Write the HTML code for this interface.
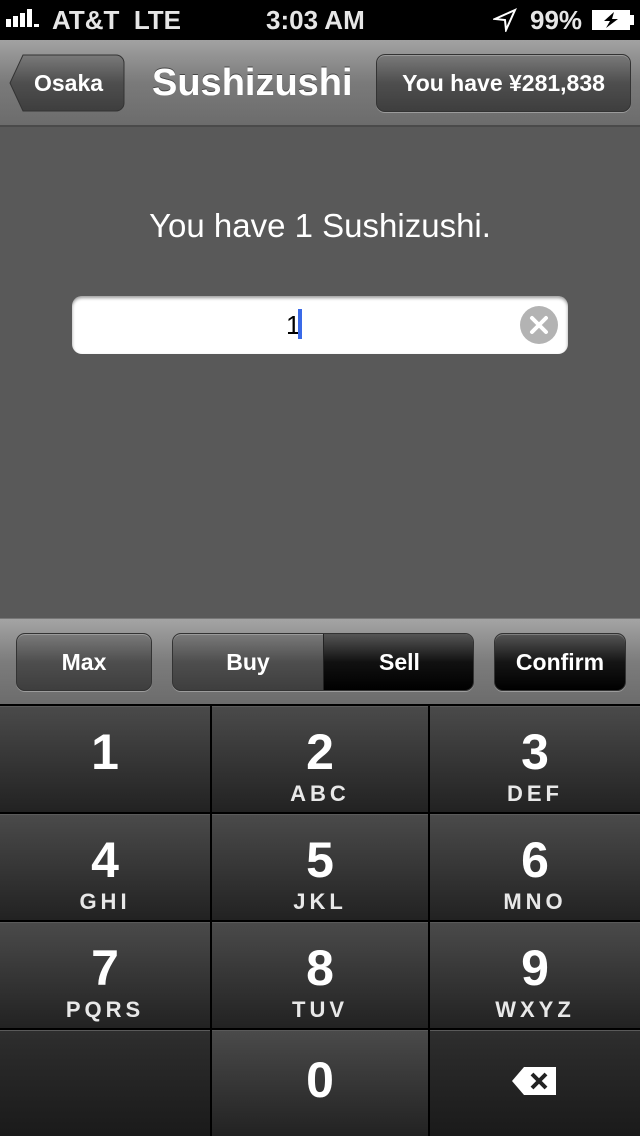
<!DOCTYPE html>
<html><head><style>
*{margin:0;padding:0;box-sizing:border-box}
body{width:640px;height:1136px;background:#595959;font-family:"Liberation Sans",sans-serif;position:relative;overflow:hidden;color:#fff}
.abs{position:absolute}
.status{left:0;top:0;width:640px;height:40px;background:#000;color:#e6e6e6;font-size:26px;font-weight:bold}
.nav{left:0;top:40px;width:640px;height:87px;background:linear-gradient(#a2a2a2,#7a7a7a 50%,#6c6c6c);border-bottom:2px solid #4a4a4a}
.btn{background:linear-gradient(#7a7a7a,#4e4e4e 50%,#3e3e3e);border:1px solid #333;border-radius:9px;box-shadow:0 1px 0 rgba(255,255,255,.3),inset 0 1px 0 rgba(255,255,255,.25);color:#fff;font-weight:bold;text-align:center}
.tool{left:0;top:618px;width:640px;height:86px;background:linear-gradient(#a4a4a4,#7c7c7c 50%,#6c6c6c);border-top:1px solid #777}
.key{position:absolute;background:linear-gradient(#4a4a4a,#222);border-top:1px solid #5a5a5a;text-align:center;color:#fff}
.key .n{font-size:50px;font-weight:bold;line-height:1;margin-top:20px}
.key .l{font-size:22px;font-weight:bold;letter-spacing:4px;color:#e8e8e8;margin-top:4px}
</style></head><body>
<div class="abs status">
 <div class="abs" style="left:6px;top:8px;width:40px;height:20px">
  <div class="abs" style="left:0;top:11px;width:5px;height:8px;background:#fff"></div>
  <div class="abs" style="left:7px;top:8px;width:5px;height:11px;background:#fff"></div>
  <div class="abs" style="left:14px;top:5px;width:5px;height:14px;background:#fff"></div>
  <div class="abs" style="left:21px;top:1px;width:5px;height:18px;background:#fff"></div>
  <div class="abs" style="left:28px;top:16px;width:5px;height:3px;background:#fff"></div>
 </div>
 <div class="abs" style="left:52px;top:5px">AT&amp;T&nbsp; LTE</div>
 <div class="abs" style="left:266px;top:5px">3:03 AM</div>
 <svg class="abs" style="left:493px;top:8px" width="24" height="24" viewBox="0 0 24 24"><path d="M22 2 L2 11 L12 12 L13 22 Z" fill="none" stroke="#fff" stroke-width="2"/></svg>
 <div class="abs" style="left:530px;top:5px">99%</div>
 <div class="abs" style="left:592px;top:10px;width:38px;height:20px;border:2px solid #fff;background:#fff"></div>
 <svg class="abs" style="left:596px;top:11px" width="30" height="18"><path d="M18 1 L8 10 L14 10 L10 17 L22 8 L16 8 Z" fill="#000"/></svg>
 <div class="abs" style="left:630px;top:15px;width:4px;height:10px;background:#fff"></div>
</div>
<div class="abs nav">
 <svg class="abs" style="left:9px;top:14px" width="116" height="58"><path d="M14 1 H107 a8 8 0 0 1 8 8 V49 a8 8 0 0 1 -8 8 H14 L1 29 Z" fill="url(#g)" stroke="#333"/><defs><linearGradient id="g" x1="0" y1="0" x2="0" y2="1"><stop offset="0" stop-color="#7a7a7a"/><stop offset=".5" stop-color="#4e4e4e"/><stop offset="1" stop-color="#3e3e3e"/></linearGradient></defs></svg>
 <div class="abs" style="left:34px;top:30px;font-size:23px;font-weight:bold">Osaka</div>
 <div class="abs" style="left:152px;top:22px;font-size:38px;font-weight:bold;text-shadow:0 -1px 0 #444">Sushizushi</div>
 <div class="abs btn" style="left:376px;top:14px;width:255px;height:58px;line-height:56px;font-size:23px">You have ¥281,838</div>
</div>
<div class="abs" style="left:0;top:207px;width:640px;text-align:center;font-size:33px">You have 1 Sushizushi.</div>
<div class="abs" style="left:72px;top:296px;width:496px;height:58px;background:#fff;border-radius:10px;box-shadow:inset 0 2px 3px rgba(0,0,0,.4)">
 <div class="abs" style="left:214px;top:14px;font-size:26px;color:#000">1</div>
 <div class="abs" style="left:226px;top:13px;width:4px;height:30px;background:#3a6ae8"></div>
 <div class="abs" style="left:448px;top:10px;width:38px;height:38px;border-radius:50%;background:#b3b3b3"></div>
 <svg class="abs" style="left:448px;top:10px" width="38" height="38"><path d="M12 12 L26 26 M26 12 L12 26" stroke="#fff" stroke-width="4" stroke-linecap="round"/></svg>
</div>
<div class="abs tool">
 <div class="abs btn" style="left:16px;top:14px;width:136px;height:58px;line-height:56px;font-size:23px">Max</div>
 <div class="abs btn" style="left:172px;top:14px;width:302px;height:58px;overflow:hidden">
  <div class="abs" style="left:0;top:0;width:150px;height:56px;line-height:56px;font-size:23px">Buy</div>
  <div class="abs" style="left:150px;top:0;width:152px;height:56px;line-height:56px;font-size:23px;background:linear-gradient(#555,#111 50%,#000);border-left:1px solid #222">Sell</div>
 </div>
 <div class="abs btn" style="left:494px;top:14px;width:132px;height:58px;line-height:56px;font-size:23px;background:linear-gradient(#555,#151515 50%,#000)">Confirm</div>
</div>
<div class="abs" style="left:0;top:704px;width:640px;height:432px;background:#000"></div>
<div class="key" style="left:0;top:706px;width:210px;height:106px"><div class="n">1</div></div>
<div class="key" style="left:212px;top:706px;width:216px;height:106px"><div class="n">2</div><div class="l">ABC</div></div>
<div class="key" style="left:430px;top:706px;width:210px;height:106px"><div class="n">3</div><div class="l">DEF</div></div>
<div class="key" style="left:0;top:814px;width:210px;height:106px"><div class="n">4</div><div class="l">GHI</div></div>
<div class="key" style="left:212px;top:814px;width:216px;height:106px"><div class="n">5</div><div class="l">JKL</div></div>
<div class="key" style="left:430px;top:814px;width:210px;height:106px"><div class="n">6</div><div class="l">MNO</div></div>
<div class="key" style="left:0;top:922px;width:210px;height:106px"><div class="n">7</div><div class="l">PQRS</div></div>
<div class="key" style="left:212px;top:922px;width:216px;height:106px"><div class="n">8</div><div class="l">TUV</div></div>
<div class="key" style="left:430px;top:922px;width:210px;height:106px"><div class="n">9</div><div class="l">WXYZ</div></div>
<div class="key" style="left:0;top:1030px;width:210px;height:106px;background:linear-gradient(#2e2e2e,#1a1a1a)"></div>
<div class="key" style="left:212px;top:1030px;width:216px;height:106px"><div class="n" style="margin-top:24px">0</div></div>
<div class="key" style="left:430px;top:1030px;width:210px;height:106px;background:linear-gradient(#2e2e2e,#1a1a1a)">
 <svg class="abs" style="left:80px;top:34px" width="48" height="32"><path d="M14 2 H46 V30 H14 L2 16 Z" fill="#fff"/><path d="M22 9 L36 23 M36 9 L22 23" stroke="#222" stroke-width="4"/></svg>
</div>
</body></html>
